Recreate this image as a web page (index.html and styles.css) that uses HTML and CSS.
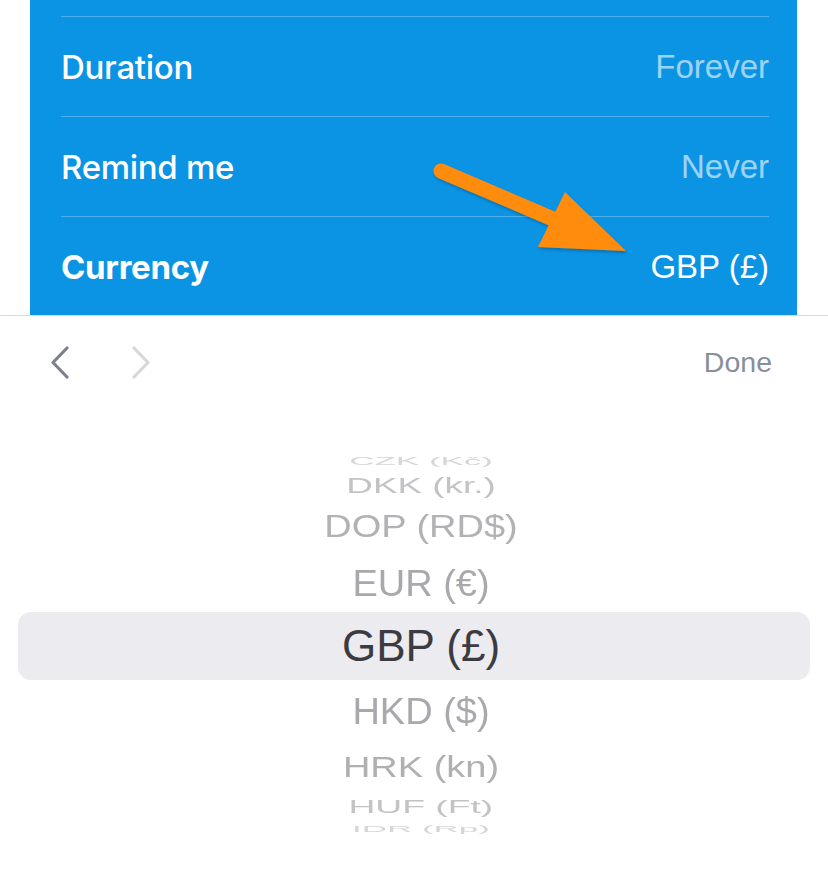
FILE: index.html
```html
<!DOCTYPE html>
<html>
<head>
<meta charset="utf-8">
<link rel="stylesheet" href="styles.css">
</head>
<body>
<div class="page">
  <div class="panel">
    <div class="row"><span class="label">Duration</span><span class="value">Forever</span></div>
    <div class="row"><span class="label">Remind me</span><span class="value">Never</span></div>
    <div class="row"><span class="label strong">Currency</span><span class="value current">GBP (£)</span></div>
  </div>
  <div class="toolbar">
    <div class="navs">
      <svg class="chev" width="24" height="34" viewBox="0 0 24 34"><polyline points="19,3 5,17.5 19,32" fill="none" stroke="#7b808b" stroke-width="3.2" stroke-linecap="round" stroke-linejoin="round"/></svg>
      <svg class="chev" width="24" height="34" viewBox="0 0 24 34"><polyline points="5,3 19,17.5 5,32" fill="none" stroke="#d7d7da" stroke-width="3.2" stroke-linecap="round" stroke-linejoin="round"/></svg>
    </div>
    <span class="done">Done</span>
  </div>
  <div class="wheel">
    <div class="item i-czk"><span>CZK (Kč)</span></div>
    <div class="item i-dkk"><span>DKK (kr.)</span></div>
    <div class="item i-dop"><span>DOP (RD$)</span></div>
    <div class="item i-eur"><span>EUR (€)</span></div>
    <div class="item selected"><span>GBP (£)</span></div>
    <div class="item i-hkd"><span>HKD ($)</span></div>
    <div class="item i-hrk"><span>HRK (kn)</span></div>
    <div class="item i-huf"><span>HUF (Ft)</span></div>
    <div class="item i-idr"><span>IDR (Rp)</span></div>
  </div>
  <svg class="arrow" width="828" height="320" viewBox="0 0 828 320">
    <defs>
      <filter id="sh" x="-20%" y="-20%" width="140%" height="140%">
        <feDropShadow dx="1" dy="2" stdDeviation="1.5" flood-color="#000" flood-opacity="0.25"/>
      </filter>
    </defs>
    <g filter="url(#sh)" fill="#ff8c0b">
      <line x1="441" y1="171" x2="560" y2="222" stroke="#ff8c0b" stroke-width="15" stroke-linecap="round"/>
      <polygon points="565,192 538,247 626,251"/>
    </g>
  </svg>
</div>
</body>
</html>
```
FILE: styles.css
```css
html, body {
  margin: 0;
  padding: 0;
  background: #ffffff;
}
.page {
  position: relative;
  width: 828px;
  height: 873px;
  overflow: hidden;
}
.panel {
  margin: 0 31px 0 30px;
  padding: 16px 28px 0 31px;
  background: #0b93e4;
  height: 299px;
}
.row {
  display: flex;
  justify-content: space-between;
  align-items: center;
  height: 99px;
  border-top: 1.5px solid rgba(255, 255, 255, 0.28);
}
.label {
  font-family: Inter, "Noto Sans", sans-serif;
  font-size: 33px;
  font-weight: 500;
  color: #ffffff;
  letter-spacing: -0.3px;
}
.label.strong {
  font-weight: 700;
}
.value {
  font-family: "Liberation Sans", Arial, sans-serif;
  font-size: 33px;
  color: rgba(255, 255, 255, 0.62);
}
.value.current {
  color: #ffffff;
}
.toolbar {
  display: flex;
  justify-content: space-between;
  align-items: center;
  height: 92px;
  border-top: 1.5px solid #dcdce0;
  padding: 0 56px 0 48px;
}
.navs {
  display: flex;
  gap: 57px;
  align-items: center;
}
.chev {
  display: block;
}
.done {
  font-family: "Liberation Sans", Arial, sans-serif;
  font-size: 28.5px;
  color: #898e99;
}
.wheel {
  display: flex;
  flex-direction: column;
  margin-top: 41px;
  font-family: "Liberation Sans", Arial, sans-serif;
  font-size: 38px;
  color: #aaaaae;
}
.item {
  display: flex;
  align-items: center;
  justify-content: center;
  padding-left: 14px;
  overflow: visible;
  white-space: nowrap;
}
.item span {
  display: block;
  line-height: 1;
}
.i-czk { height: 24px; color: #d6d6d8; }
.i-czk span { transform: scale(0.92, 0.28); }
.i-dkk { height: 24px; color: #c3c3c6; }
.i-dkk span { transform: scale(0.97, 0.6); }
.i-dop { height: 58px; color: #b2b2b5; }
.i-dop span { transform: scale(1, 0.82); }
.i-eur { height: 57px; color: #a9a9ad; }
.i-eur span { transform: scale(1, 0.96); }
.selected {
  height: 68px;
  margin: 0 18px;
  background: #ececf0;
  border-radius: 13px;
  color: #3b3b41;
  font-size: 44px;
}
.i-hkd { height: 62px; color: #a9a9ad; }
.i-hkd span { transform: scale(1, 0.97); }
.i-hrk { height: 50px; color: #b0b0b3; }
.i-hrk span { transform: scale(1, 0.76); }
.i-huf { height: 28px; color: #c3c3c6; }
.i-huf span { transform: scale(0.98, 0.5); }
.i-idr { height: 18px; color: #d6d6d8; }
.i-idr span { transform: scale(0.92, 0.25); }
.arrow {
  position: absolute;
  top: 0;
  left: 0;
  pointer-events: none;
}
```
